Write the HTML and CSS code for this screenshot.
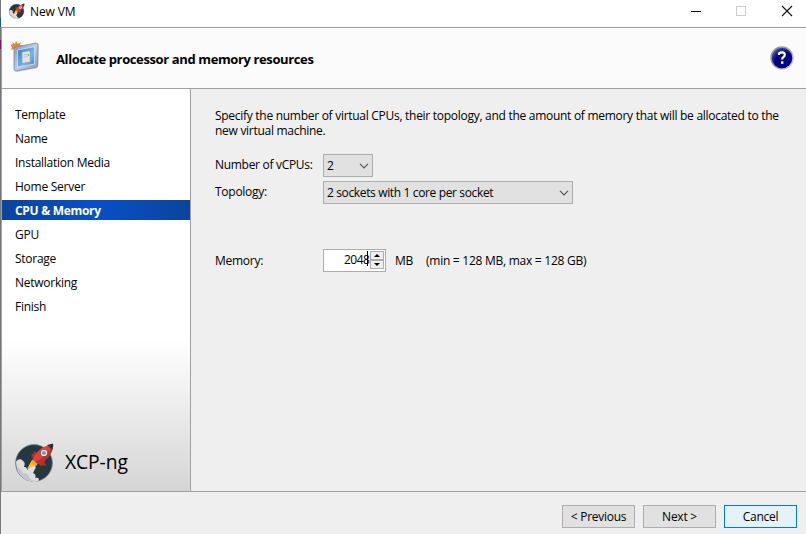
FILE: index.html
```html
<!DOCTYPE html>
<html lang="en">
<head>
<meta charset="utf-8">
<title>New VM</title>
<link rel="stylesheet" href="styles.css">
</head>
<body>
<svg class="defs" aria-hidden="true">
  <symbol id="rocket" viewBox="0 0 40 40">
    <circle cx="19" cy="21" r="18.4" fill="#253840" stroke="#77858b" stroke-width=".8"/>
    <path d="M1 20c1-3 5-4 7-1 2 1 2 3 1 6 3 0 3 2 3 3l5-6 4 3-3 6c3 1 3 4 2 5 3-1 5 1 3 3l-4 1C9 39 1 31 1 20z" fill="#dedede"/>
    <path d="M2 26c3 0 5 2 6 5 4 0 6 2 7 6l6 2C11 40 4 34 2 26z" fill="#c5c7c8"/>
    <path d="M17 18l-5 9 10-4z" fill="#f8c63c"/>
    <path d="M18 17l-2 5 5 2 3-4z" fill="#f6a829"/>
    <path d="M22 12c-2-4-4-3-3 0-3-1-3 2-1 3-2 3 0 4 4 2zM26 18c4-1 5 1 3 3 4 1 2 4-1 2-2 2-5 0-3-3z" fill="#b92e2b"/>
    <path d="M18 18c2-8 9-14 20-16 1 8-6 17-15 20z" fill="#d5463f"/>
    <path d="M20 20C27 17 34 11 38 2c1 8-6 17-15 20z" fill="#b8312f"/>
    <path d="M32 3l6-1.500c.5 2 .2 4-1 6z" fill="#25343b"/>
    <circle cx="29" cy="11" r="3.100" fill="#e9f4f5"/>
    <circle cx="29" cy="11" r="2" fill="#53a6b8"/>
  </symbol>
</svg>
<div class="window">
  <header class="titlebar">
    <svg class="app-icon"><use href="#rocket"/></svg>
    <span class="caption">New VM</span>
    <svg class="window-controls" width="110" height="24" viewBox="0 0 110 24" fill="none">
      <path d="M0 11.500h10" stroke="#000"/>
      <rect x="45.500" y="6.500" width="9" height="9" stroke="#ccc"/>
      <path d="M91 6l10 10M101 6L91 16" stroke="#111" stroke-width="1.100"/>
    </svg>
  </header>
  <div class="banner">
    <svg class="vm-icon" width="30" height="34" viewBox="0 0 30 34">
      <defs>
        <linearGradient id="frame" x2="1" y2="1"><stop stop-color="#7991bb"/><stop offset=".5" stop-color="#c3cede"/><stop offset="1" stop-color="#8796b2"/></linearGradient>
        <linearGradient id="screen" x2="1" y2="1"><stop stop-color="#2c78c9"/><stop offset=".6" stop-color="#72b8ee"/><stop offset="1" stop-color="#3a88d3"/></linearGradient>
      </defs>
      <path d="M1 1l3 2 1-3 2 3 3-2-1 3 3 1-3 2 1 3-4-1-2 2-1-3-3 1 1-3-2-2 3-1z" fill="#ef8421"/>
      <path d="M5 6l20-4q2 0 2 2l-.5 20q0 2-2 2.500L5 30q-2 0-2-2V8q0-2 2-2z" fill="#777" opacity=".3" transform="translate(1 1)"/>
      <path d="M5 6l20-4q2 0 2 2l-.5 20q0 2-2 2.500L5 30q-2 0-2-2V8q0-2 2-2z" fill="url(#frame)" stroke="#7686a8" stroke-width=".8"/>
      <path d="M6.500 9L23.500 5.800v17.200L6.500 26z" fill="url(#screen)" stroke="#dce8f5" stroke-width=".7"/>
      <path d="M11 11l7-1.300 1.300 1.300V21l-8.300 1.500z" fill="#dfe3e7" stroke="#8a98a8" stroke-width=".7"/>
      <path d="M12.500 14l4-.7M12.500 16l4-.7" stroke="#bcc4ca"/>
      <circle cx="17.500" cy="14" r=".8" fill="#38b738"/>
    </svg>
    <h1>Allocate processor and memory resources</h1>
    <svg class="help" width="24" height="24" viewBox="0 0 24 24">
      <defs>
        <radialGradient id="orb" cx=".65" cy=".7" r=".8"><stop stop-color="#02028a"/><stop offset=".6" stop-color="#06067c"/><stop offset="1" stop-color="#5260bb"/></radialGradient>
        <linearGradient id="rim" x2="1" y2="1"><stop stop-color="#8a8a8a"/><stop offset="1" stop-color="#cfcfcf"/></linearGradient>
      </defs>
      <circle cx="12" cy="12" r="11.700" fill="url(#rim)"/>
      <circle cx="12" cy="12" r="10.300" fill="url(#orb)"/>
      <path d="M9 9V7.400Q10 6.300 12.100 6.300q2.700.1 2.700 2.400 0 1.500-1.400 2.300-1.300.8-1.300 2.600" fill="none" stroke="#fff" stroke-width="2.200"/>
      <rect x="11" y="15.300" width="2.400" height="2.500" fill="#fff"/>
    </svg>
  </div>
  <div class="body">
    <nav class="sidebar">
      <ul>
        <li>Template</li><li>Name</li><li>Installation Media</li><li>Home Server</li>
        <li class="current">CPU &amp; Memory</li>
        <li>GPU</li><li>Storage</li><li>Networking</li><li>Finish</li>
      </ul>
      <div class="brand"><svg class="brand-icon"><use href="#rocket"/></svg><span>XCP-ng</span></div>
    </nav>
    <main>
      <p class="intro">Specify the number of virtual CPUs, their topology, and the amount of memory that will be allocated to the<br>new virtual machine.</p>
      <div class="row"><span class="label vcpus">Number of vCPUs:</span>
        <div class="select small"><span>2</span><svg width="10" height="6" viewBox="0 0 10 6"><path d="M1 .8l4 4 4-4" fill="none" stroke="#555" stroke-width="1.200"/></svg></div></div>
      <div class="row"><span class="label">Topology:</span>
        <div class="select wide"><span>2 sockets with 1 core per socket</span><svg width="10" height="6" viewBox="0 0 10 6"><path d="M1 .8l4 4 4-4" fill="none" stroke="#555" stroke-width="1.200"/></svg></div></div>
      <div class="row memory"><span class="label">Memory:</span>
        <div class="spinner"><span class="value">2048</span><i class="caret"></i>
          <div class="steps"><b><svg width="6" height="3" viewBox="0 0 6 3"><path d="M0 3l3-3 3 3z"/></svg></b><b><svg width="6" height="3" viewBox="0 0 6 3"><path d="M0 0l3 3 3-3z"/></svg></b></div></div>
        <span class="unit">MB</span><span class="range">(min = 128 MB, max = 128 GB)</span></div>
    </main>
  </div>
  <footer><div class="button">&lt; Previous</div><div class="button">Next &gt;</div><div class="button focus">Cancel</div></footer>
</div>
</body>
</html>
```

FILE: styles.css
```css
* { box-sizing: border-box; }
body { margin: 0; width: 806px; height: 534px; overflow: hidden; background: #efefef; color: #000; font: 12px/15px "Open Sans", "Noto Sans", sans-serif; letter-spacing: -.26px; white-space: nowrap; }
.defs { position: absolute; width: 0; height: 0; }
svg { display: block; flex: none; }
.window { height: 534px; display: flex; flex-direction: column; border-left: 1px solid; border-image: linear-gradient(#777 0 19px, #145a9b 19px 28px, #777 28px 41px, #7b174c 41px 50px, #777 50px) 1; }
.titlebar { height: 27px; background: #fff; display: flex; align-items: flex-start; padding: 0 5px 0 8px; }
.app-icon { width: 16px; height: 16px; margin-top: 3px; }
.caption { margin: 4px 0 0 5px; letter-spacing: -.12px; }
.window-controls { margin-left: auto; }
.banner { height: 62px; background: #fbfbfb; border: solid #a0a0a0; border-width: 1px 0 1px 1px; display: flex; align-items: center; padding: 0 12px 0 9px; }
.vm-icon { margin-top: -1px; }
h1 { margin: 2px 0 0 15px; font-size: 13px; line-height: 18px; font-weight: 700; letter-spacing: -.38px; }
.help { margin-left: auto; }
.body { height: 403px; display: flex; border: solid #a0a0a0; border-width: 0 0 1px 1px; }
.sidebar { width: 189px; display: flex; flex-direction: column; border-right: 1px solid #a0a0a0; background: linear-gradient(#fff 0 250px, #d5d5d5 402px); }
ul { list-style: none; margin: 0; padding: 15px 0 0; }
li { height: 20px; margin-bottom: 4px; padding: 0 0 0 13px; line-height: 22px; }
.current { height: 20px; margin-top: -4px; position: static; margin-top: 0; color: #fff; font-weight: 700; background: linear-gradient(90deg, #0a449b, #094fc8 50%, #0a449b); letter-spacing: -.3px; }
.brand { margin-top: auto; height: 49px; padding-left: 13px; display: flex; font-size: 19.3px; line-height: 24px; letter-spacing: -.1px; }
.brand-icon { width: 40px; height: 40px; }
.brand span { margin: 8px 0 0 10px; }
main { padding: 19px 0 0 24px; }
.intro { margin: 0 0 16px; letter-spacing: -.282px; }
.row { display: flex; height: 23px; margin-bottom: 4px; line-height: 22px; }
.label { width: 108px; }
.vcpus { letter-spacing: -.3px; }
.select { height: 23px; background: #e1e1e1; border: 1px solid #adadad; padding: 0 3px; display: flex; align-items: center; justify-content: space-between; letter-spacing: -.36px; }
.select span { padding-top: 1px; }
.small { width: 50px; }
.wide { width: 250px; }
.memory { margin-top: 45px; line-height: 24px; }
.spinner { width: 63px; height: 23px; background: #fff; border: 1px solid #adadad; display: flex; padding: 1px 1px 0 20px; }
.value { width: 23px; line-height: 17px; letter-spacing: -.5px; }
.caret { width: 1px; height: 15px; background: #000; }
.steps { width: 14px; margin-left: 2px; }
.steps b { display: flex; width: 14px; height: 9px; align-items: center; justify-content: center; border: 1px solid #adadad; background: #efefef; }
.unit { margin-left: 9px; width: 31px; }
footer { flex: 1; display: flex; gap: 8px; justify-content: flex-end; padding: 13px 9px 0 0; }
.button { width: 73px; height: 23px; border: 1px solid #adadad; background: #e1e1e1; text-align: center; line-height: 22px; }
.focus { border-color: #0078d7; background: #e5f1fb; }
```
